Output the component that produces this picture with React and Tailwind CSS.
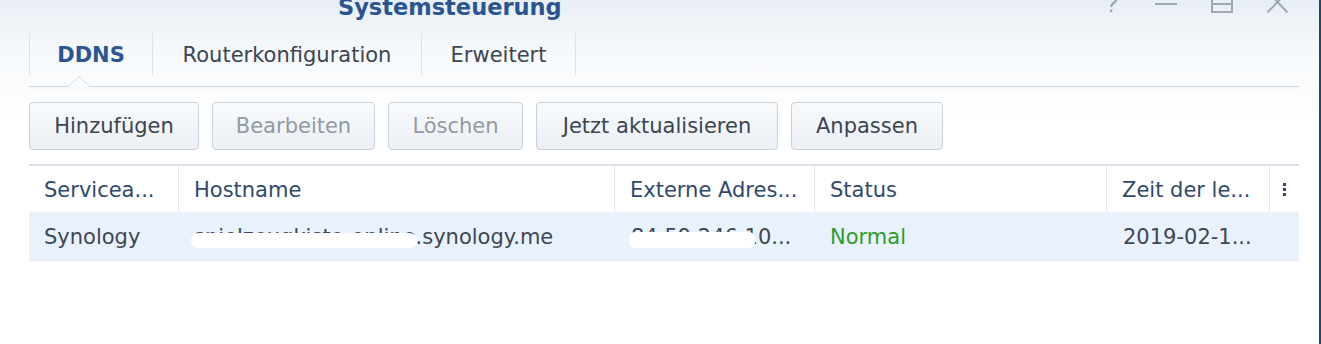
export default function App() {
  const cols = [150, 436, 200, 292, 163, 29];
  const headers = ["Servicea...", "Hostname", "Externe Adres...", "Status", "Zeit der le..."];
  return (
    <div className="relative w-[1321px] h-[344px] overflow-hidden border-r-2 border-[#24436f] bg-[linear-gradient(to_bottom,#e8eef5_0px,#f5f8fb_45px,#ffffff_120px)] font-['DejaVu_Sans',sans-serif] text-[21px]">
      {/* title bar */}
      <div className="flex h-[28px] items-start">
        <div className="ml-[338px] -mt-[6px] text-[22.5px] font-bold leading-[26px] text-[#2a5590] whitespace-nowrap">
          Systemsteuerung
        </div>
        <div className="ml-auto mr-[31px] flex items-start">
          <svg width="14" height="14" viewBox="0 0 14 14" className="block">
            <path d="M1.5 -2 C1.5 -7 12.5 -7 12.5 -1.5 C12.5 3 7 2.5 7 7" fill="none" stroke="#9fa7af" strokeWidth="2.2" />
            <rect x="5.9" y="9.5" width="2.4" height="2.6" fill="#9fa7af" />
          </svg>
          <svg width="22" height="14" viewBox="0 0 22 14" className="block ml-[37px]">
            <line x1="0" y1="4" x2="22" y2="4" stroke="#9fa7af" strokeWidth="2" />
          </svg>
          <svg width="22" height="14" viewBox="0 0 22 14" className="block ml-[34px]">
            <rect x="1" y="-8" width="20" height="20" fill="none" stroke="#9fa7af" strokeWidth="2" />
            <line x1="1" y1="4" x2="21" y2="4" stroke="#9fa7af" strokeWidth="2" />
          </svg>
          <svg width="21" height="14" viewBox="0 0 21 14" className="block ml-[34px]">
            <line x1="0.5" y1="-8.5" x2="20.5" y2="12.5" stroke="#9fa7af" strokeWidth="2" />
            <line x1="20.5" y1="-8.5" x2="0.5" y2="12.5" stroke="#9fa7af" strokeWidth="2" />
          </svg>
        </div>
      </div>

      {/* tabs */}
      <div className="ml-[29px] w-[1270px] pt-[5px]">
        <div className="flex h-[42px]">
          <div className="flex w-[124px] items-center justify-center border-x border-[#dde2e8] pt-[3px] font-bold text-[#2a5590]">
            DDNS
          </div>
          <div className="flex w-[269px] items-center justify-center border-r border-[#dde2e8] pt-[3px] text-[#3c4550]">
            Routerkonfiguration
          </div>
          <div className="flex w-[154px] items-center justify-center border-r border-[#dde2e8] pt-[3px] text-[#3c4550]">
            Erweitert
          </div>
        </div>
        <div className="relative mt-[11px] h-px bg-[#d3d9e0] shadow-[0_1px_3px_rgba(0,0,0,0.07)]">
          <svg width="22" height="12" viewBox="0 0 22 12" className="absolute left-[39px] -top-[10px] block">
            <polygon points="0,11 11,0.5 22,11" fill="#fbfcfd" />
            <polyline points="0,10.5 11,0.5 22,10.5" fill="none" stroke="#d3d9e0" strokeWidth="1" />
          </svg>
        </div>
      </div>

      {/* toolbar */}
      <div className="ml-[29px] mt-[15px] flex gap-[13px]">
        {[
          ["Hinzufügen", "w-[170px]", false],
          ["Bearbeiten", "w-[163px]", true],
          ["Löschen", "w-[135px]", true],
          ["Jetzt aktualisieren", "w-[242px]", false],
          ["Anpassen", "w-[152px]", false],
        ].map(([label, w, disabled]) => (
          <div
            key={label}
            className={`${w} flex h-[48px] items-center justify-center rounded-[4px] border border-[#c8d0d9] bg-[linear-gradient(to_bottom,#f8fafc,#ebf0f5)] pt-[1px] ${disabled ? "text-[#939aa2]" : "text-[#3c4550]"}`}
          >
            {label}
          </div>
        ))}
      </div>

      {/* table */}
      <div className="ml-[29px] mt-[14px] w-[1270px] border-t-2 border-[#dae0e7]">
        <div className="flex h-[46px] bg-white">
          {cols.map((w, i) => (
            <div
              key={i}
              style={{ width: w }}
              className={`flex items-center whitespace-nowrap text-[#30496b] ${i < 5 ? "border-r border-[#e2e7ed] pl-[15px] pt-[3px]" : "justify-center"}`}
            >
              {i < 5 ? (
                headers[i]
              ) : (
                <div className="flex flex-col gap-[2px]">
                  <div className="h-[3px] w-[3px] bg-[#30496b]" />
                  <div className="h-[3px] w-[3px] bg-[#30496b]" />
                  <div className="h-[3px] w-[3px] bg-[#30496b]" />
                </div>
              )}
            </div>
          ))}
        </div>
        <div className="flex h-[49px] border-b border-[#e2ebf5] bg-[#e9f2fc] pt-[3px] text-[#3e4753]">
          <div className="flex w-[150px] items-center pl-[15px]">Synology</div>
          <div className="relative flex w-[436px] items-center pl-[15px] whitespace-nowrap">
            <span>spielzeugkiste-online.synology.me</span>
            <div className="absolute left-[12px] top-[18px] h-[15px] w-[226px] rounded-full bg-white" />
          </div>
          <div className="relative flex w-[200px] items-center pl-[16px] whitespace-nowrap">
            <span>84.59.246.10...</span>
            <div className="absolute left-[14px] top-[17px] h-[16px] w-[126px] rounded-[6px] bg-white" />
          </div>
          <div className="flex w-[292px] items-center pl-[15px] text-[#2e9c2a]">Normal</div>
          <div className="flex w-[163px] items-center pl-[16px] whitespace-nowrap">2019-02-1...</div>
          <div className="w-[29px]" />
        </div>
      </div>
    </div>
  );
}
